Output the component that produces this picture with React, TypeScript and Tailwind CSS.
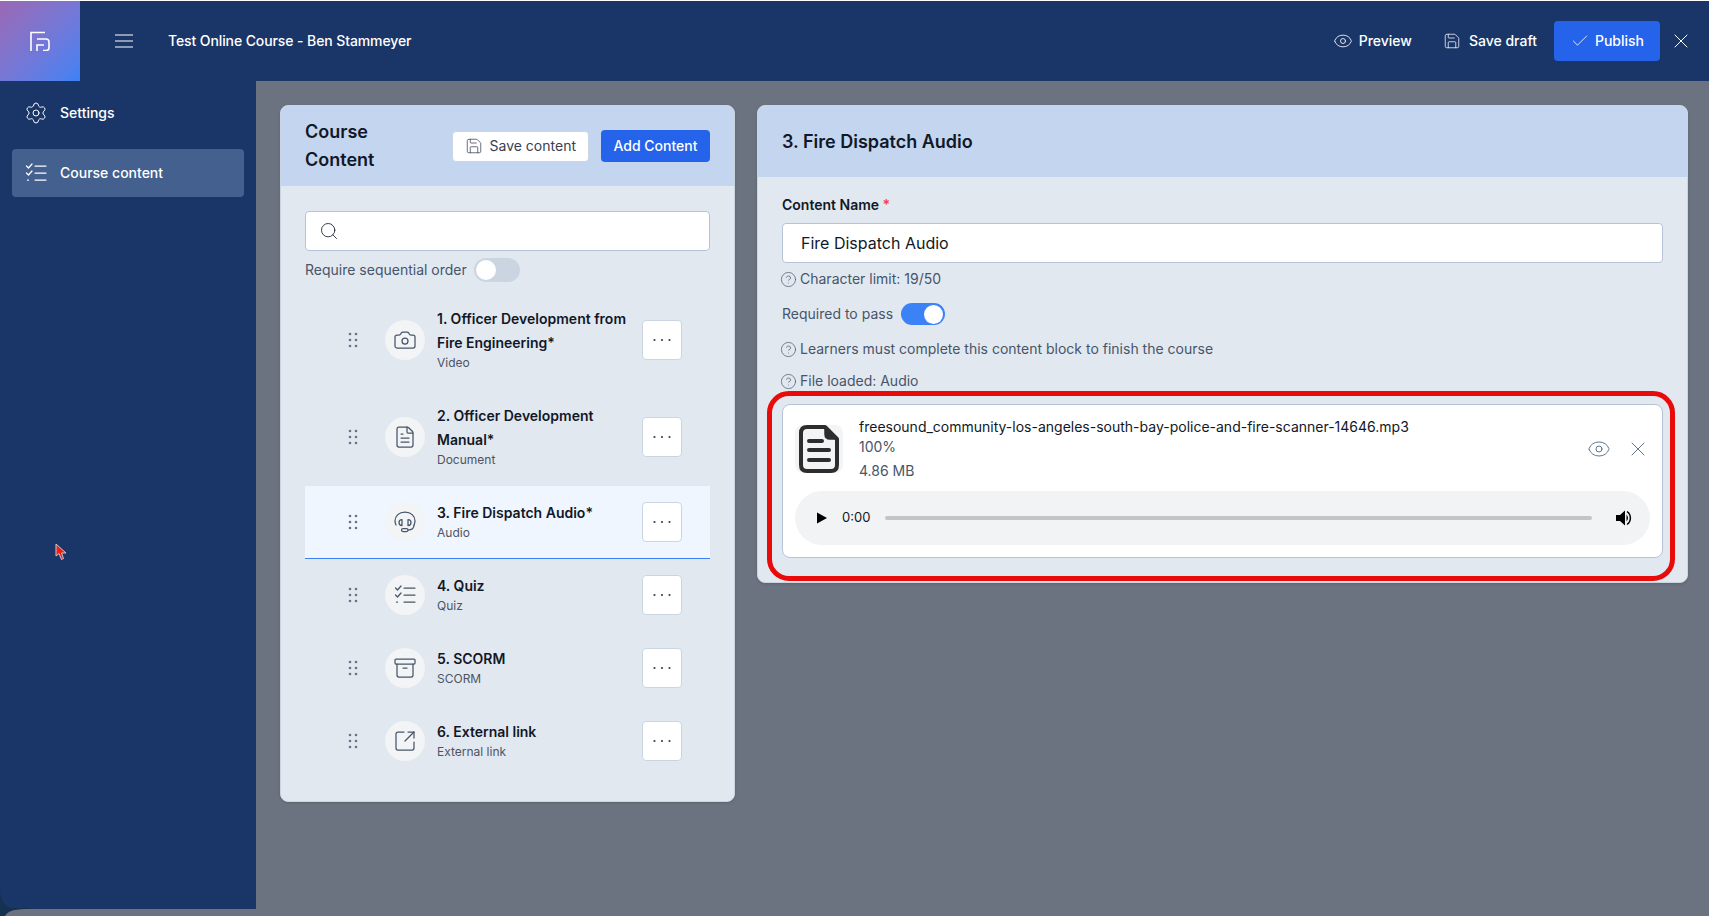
import {
  Archive,
  Camera,
  Check,
  CircleHelp,
  Eye,
  FileText,
  Save,
  Search,
  Settings,
  SquareArrowOutUpRight,
  X,
} from "lucide-react";
import type { ReactNode } from "react";

interface ipItem {
  title: string;
  kind: string;
  icon: ReactNode;
  active?: boolean;
}

function ChecksIcon({ className }: { className: string }) {
  return (
    <svg viewBox="0 0 24 24" className={className} fill="none" stroke="currentColor" strokeWidth="1.25" strokeLinecap="round" strokeLinejoin="round">
      <path d="M11 5H22M11 12H22M11 19H22" />
      <path d="M2.5 5L4.5 7L8 3" />
      <path d="M2.5 12L4.5 14L8 10" />
      <path d="M3.5 19H4.5" />
    </svg>
  );
}

function HeadsetIcon({ className }: { className: string }) {
  return (
    <svg viewBox="0 0 24 24" className={className} fill="none" stroke="currentColor" strokeWidth="1.25" strokeLinecap="round" strokeLinejoin="round">
      <path d="M3 15C2 13 2 12 2 11C2 6 6 2 12 2C18 2 22 6 22 11C22 12 22 13 21 15" />
      <path d="M9 9.5C7 9.5 6 11 6 12.5C6 14 7 15.5 9 15.5Z" />
      <path d="M15 9.5C17 9.5 18 11 18 12.5C18 14 17 15.5 15 15.5Z" />
      <path d="M21 15C21 18 19 20 15 20" />
      <rect x="8.5" y="18.5" width="6.5" height="3" rx="1.5" />
    </svg>
  );
}

const itemIcon = "w-6 h-6 text-[#475569]";

const items: ipItem[] = [
  { title: "1. Officer Development from Fire Engineering*", kind: "Video", icon: <Camera className={itemIcon} strokeWidth={1.25} /> },
  { title: "2. Officer Development Manual*", kind: "Document", icon: <FileText className={itemIcon} strokeWidth={1.25} /> },
  { title: "3. Fire Dispatch Audio*", kind: "Audio", icon: <HeadsetIcon className={itemIcon} />, active: true },
  { title: "4. Quiz", kind: "Quiz", icon: <ChecksIcon className={itemIcon} /> },
  { title: "5. SCORM", kind: "SCORM", icon: <Archive className={itemIcon} strokeWidth={1.25} /> },
  { title: "6. External link", kind: "External link", icon: <SquareArrowOutUpRight className={itemIcon} strokeWidth={1.25} /> },
];

function Logo() {
  return (
    <svg viewBox="0 0 20 20" className="w-5 h-5" fill="none" stroke="white" strokeWidth="1.6">
      <path d="M1 20V1.5H15" />
      <path d="M7 20V14H14" />
      <path d="M7 8H16C18 8 19 9 19 11V17C19 19 18 19.5 16 19.5H13" />
    </svg>
  );
}

function HelpLine({ text }: { text: string }) {
  return (
    <div className="flex items-center gap-[3px] -ml-[2px] text-sm leading-5 text-[#475569]">
      <CircleHelp className="w-[17px] h-[17px]" strokeWidth={1} />
      <span>{text}</span>
    </div>
  );
}

function GripDots() {
  return (
    <svg viewBox="0 0 20 20" className="w-5 h-5 shrink-0" fill="#64748b">
      <circle cx="7" cy="4" r="1.3" />
      <circle cx="13" cy="4" r="1.3" />
      <circle cx="7" cy="10" r="1.3" />
      <circle cx="13" cy="10" r="1.3" />
      <circle cx="7" cy="16" r="1.3" />
      <circle cx="13" cy="16" r="1.3" />
    </svg>
  );
}

function Row({ title, kind, icon, active }: ipItem) {
  return (
    <div className={`flex items-center py-4 pl-[38px] pr-[28px] border-b ${active ? "bg-[#eff6ff] border-[#3b82f6]" : "border-transparent"}`}>
      <GripDots />
      <div className="ml-[22px] w-10 h-10 rounded-full bg-[#f3f4f6] flex items-center justify-center shrink-0">
        {icon}
      </div>
      <div className="ml-3 flex-1 min-w-0 -translate-y-[1px]">
        <div className="text-sm font-semibold leading-6 text-[#111827]">{title}</div>
        <div className="text-xs leading-4 text-[#4b5563]">{kind}</div>
      </div>
      <button className="ml-3 w-10 h-10 bg-white border border-[#cbd5e1] rounded flex items-center justify-center shrink-0">
        <svg viewBox="0 0 20 4" className="w-5 h-1" fill="#334155">
          <circle cx="2.5" cy="2" r="1.1" />
          <circle cx="10" cy="2" r="1.1" />
          <circle cx="17.5" cy="2" r="1.1" />
        </svg>
      </button>
    </div>
  );
}

export default function App() {
  return (
    <div className="relative h-screen flex flex-col overflow-hidden bg-[#6b7280] font-['Inter',sans-serif]">
      <div className="h-px bg-white" />
      <header className="h-20 bg-[#1a3668] flex items-center text-white text-sm font-medium shrink-0">
        <div className="w-20 h-20 bg-gradient-to-br from-[#9a68b4] to-[#3b82f6] flex items-center justify-center">
          <Logo />
        </div>
        <svg viewBox="0 0 18 14" className="ml-[35px] w-[18px] h-[14px]" fill="none" stroke="white" strokeWidth="1">
          <path d="M0 1H18M0 7H18M0 13H18" />
        </svg>
        <div className="ml-[35px] tracking-[-0.1px]">Test Online Course - Ben Stammeyer</div>
        <div className="ml-auto flex items-center pr-4">
          <Eye className="w-5 h-5" strokeWidth={1} />
          <span className="ml-[6px]">Preview</span>
          <Save className="ml-[31px] w-[18px] h-[18px]" strokeWidth={1} />
          <span className="ml-2">Save draft</span>
          <button className="ml-[17px] h-10 w-[106px] rounded bg-[#2563eb] flex items-center justify-center gap-[5px]">
            <Check className="w-5 h-5" strokeWidth={1} />
            Publish
          </button>
          <X className="ml-[9px] w-6 h-6" strokeWidth={1} />
        </div>
      </header>

      <div className="flex flex-1 min-h-0">
        <aside className="w-64 h-[828px] bg-[#1a3668] px-3 pt-2 flex flex-col gap-3 text-sm font-medium text-white shrink-0">
          <div className="h-12 flex items-center gap-3 pl-3">
            <Settings className="w-6 h-6" strokeWidth={1} />
            Settings
          </div>
          <div className="h-12 flex items-center gap-3 pl-3 rounded bg-[#43608f]">
            <ChecksIcon className="w-6 h-6" />
            Course content
          </div>
        </aside>

        <main className="flex-1 pl-6 pr-[21px] pt-6 flex items-start gap-[22px]">
          <section className="w-[455px] rounded-lg overflow-hidden bg-[#e2e8f0] border border-[#cbd5e1] shadow">
            <div className="h-20 bg-[#c4d5ef] flex items-center px-6">
              <h2 className="w-[120px] text-lg leading-7 font-semibold text-[#111827]">Course Content</h2>
              <button className="ml-auto h-[31px] pl-3 pr-3 bg-white border border-[#cbd5e1] rounded flex items-center gap-[7px] text-sm text-[#374151]">
                <Save className="w-[18px] h-[18px]" strokeWidth={1} />
                Save content
              </button>
              <button className="ml-3 h-8 w-[109px] rounded bg-[#2563eb] text-sm font-medium text-white">Add Content</button>
            </div>
            <div className="px-6 pt-[25px] pb-[23px]">
              <div className="h-10 bg-white border border-[#b6c3d6] rounded flex items-center pl-[13px]">
                <Search className="w-5 h-5 text-[#111827]" strokeWidth={1} />
              </div>
              <div className="mt-[7px] h-6 flex items-center text-sm text-[#475569]">
                Require sequential order
                <div className="ml-[7px] w-[46px] h-6 rounded-full bg-[#cbd5e1] flex items-center pl-0.5">
                  <div className="w-5 h-5 rounded-full bg-white" />
                </div>
              </div>
              <div className="mt-[10px]">
                {items.map((item) => (
                  <Row key={item.title} {...item} />
                ))}
              </div>
            </div>
          </section>

          <section className="flex-1 rounded-lg overflow-hidden bg-[#e2e8f0] border border-[#cbd5e1] shadow">
            <div className="h-[71px] bg-[#c4d5ef] flex items-center px-6">
              <h2 className="text-lg font-semibold text-[#111827]">3. Fire Dispatch Audio</h2>
            </div>
            <div className="px-6 pt-[18px] pb-6">
              <label className="block text-sm leading-5 font-semibold text-[#111827]">
                Content Name <span className="text-[#ef4444]">*</span>
              </label>
              <div className="mt-2 h-10 bg-white border border-[#b6c3d6] rounded flex items-center pl-[18px] text-base text-[#111827]">
                Fire Dispatch Audio
              </div>
              <div className="mt-[6px]">
                <HelpLine text="Character limit: 19/50" />
              </div>
              <div className="mt-[13px] h-6 flex items-center text-sm text-[#475569]">
                Required to pass
                <div className="ml-2 w-11 h-[22px] rounded-full bg-[#3b82f6] flex items-center justify-end pr-0.5">
                  <div className="w-[19px] h-[19px] rounded-full bg-white" />
                </div>
              </div>
              <div className="mt-[13px]">
                <HelpLine text="Learners must complete this content block to finish the course" />
              </div>
              <div className="mt-3">
                <HelpLine text="File loaded: Audio" />
              </div>
              <div className="mt-[13px] bg-white border border-[#b6c3d6] rounded-lg p-3">
                <div className="flex items-center">
                  <div className="w-12 h-12 rounded-lg bg-[#f3f4f6] shrink-0">
                    <svg viewBox="0 0 48 48" className="w-12 h-12" fill="none" stroke="#2d2d2d" strokeWidth="4" strokeLinecap="round" strokeLinejoin="round">
                      <path d="M30 2H12C7 2 6 5 6 8V40C6 44 8 46 12 46H36C40 46 42 44 42 40V14Z" />
                      <path d="M30 2L42 14H35C32 14 30 12 30 9Z" fill="#2d2d2d" strokeWidth="1.5" />
                      <path d="M14 16H27M14 25H34M14 35H34" />
                    </svg>
                  </div>
                  <div className="ml-4 flex-1">
                    <div className="text-sm leading-5 text-[#111827]">freesound_community-los-angeles-south-bay-police-and-fire-scanner-14646.mp3</div>
                    <div className="text-sm leading-5 text-[#475569]">100%</div>
                    <div className="mt-1 text-sm leading-5 text-[#475569]">4.86 MB</div>
                  </div>
                  <Eye className="w-6 h-6 text-[#64748b] mr-px" strokeWidth={1} />
                  <X className="ml-[14px] w-6 h-6 text-[#64748b]" strokeWidth={1} />
                </div>
                <div className="mt-[10px] h-[54px] rounded-full bg-[#f1f3f4] flex items-center pl-[21px] pr-[18px]">
                  <svg viewBox="0 0 12 14" className="w-3 h-3.5" fill="black"><path d="M1 1.5L11 7L1 12.5Z" /></svg>
                  <span className="ml-[14px] text-[13px] text-[#111827]">0:00</span>
                  <div className="ml-[15px] flex-1 h-1 rounded-full bg-[#c4c4c4]" />
                  <svg viewBox="0 0 16 16" className="ml-6 w-4 h-4" fill="black">
                    <path d="M0 5H4L9 0.5V15.5L4 11H0Z" />
                    <path d="M10.5 4.5C12.5 6.5 12.5 9.5 10.5 11.5Z" />
                    <path d="M11 1.5C15.5 4.5 15.5 11.5 11 14.5" fill="none" stroke="black" strokeWidth="1.5" />
                  </svg>
                </div>
              </div>
            </div>
          </section>
        </main>
      </div>

      {/* red annotation around the file block */}
      <div className="absolute left-[767px] top-[391px] w-[908px] h-[190px] border-[5px] border-[#e90a0a] rounded-[22px] pointer-events-none" />

      {/* recorded cursor */}
      <svg viewBox="0 0 12 18" className="absolute left-[55px] top-[543px] w-3 h-[18px]">
        <path d="M1 1V13L4 10.5L6.5 16.5L8.5 15.5L6.5 10H11Z" fill="#f0200e" stroke="#c9c9d6" strokeWidth="1" />
      </svg>

      {/* window corner */}
      <svg viewBox="0 0 30 24" className="absolute left-0 bottom-0 w-[30px] h-6">
        <path d="M0 0C1 8 4 14 10 16H30V17C16 17 8 18 5 24H0Z" fill="#16304f" />
      </svg>
    </div>
  );
}
